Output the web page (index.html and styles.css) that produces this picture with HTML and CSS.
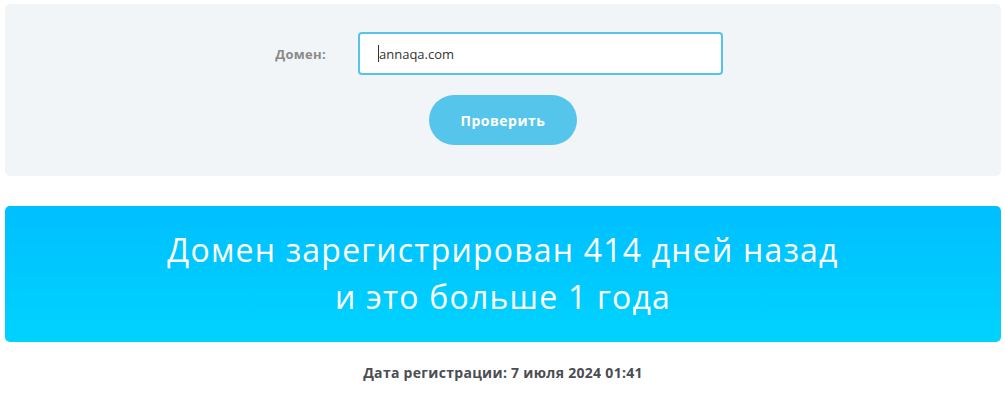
FILE: index.html
```html
<!DOCTYPE html>
<html lang="ru">
<head>
<meta charset="utf-8">
<link rel="stylesheet" href="styles.css">
</head>
<body>
<div class="page">
  <form class="check">
    <div class="row">
      <label class="label">Домен:</label>
      <div class="input"><span class="caret"></span>annaqa.com</div>
    </div>
    <div class="btnrow"><button type="button" class="btn">Проверить</button></div>
  </form>
  <div class="result">
    <p>Домен зарегистрирован 414 дней назад</p>
    <p>и это больше 1 года</p>
  </div>
  <div class="date">Дата регистрации: 7 июля 2024 01:41</div>
</div>
</body>
</html>
```
FILE: styles.css
```css
* { box-sizing: border-box; }
html, body { margin: 0; padding: 0; background: #fff; }
body { font-family: "Open Sans", "Noto Sans", sans-serif; }
.page { padding: 4px 4px 0 5px; }
.check {
  background: #f2f5f7;
  border-radius: 5px;
  height: 172px;
  padding-top: 28px;
  margin: 0;
}
.row { display: flex; align-items: center; }
.label {
  width: 321px;
  text-align: right;
  font-size: 13px;
  font-weight: 700;
  color: #8a8a8a;
  letter-spacing: 0.3px;
}
.input {
  margin-left: 32px;
  width: 365px;
  height: 43px;
  border: 2px solid #55c4eb;
  border-radius: 4px;
  background: #fff;
  display: flex;
  align-items: center;
  padding-left: 18px;
  font-size: 13px;
  color: #333;
}
.caret { display: inline-block; width: 1px; height: 17px; background: #333; }
.btnrow { display: flex; padding-left: 424px; margin-top: 20px; }
.btn {
  width: 148px;
  height: 50px;
  border: 0;
  border-radius: 25px;
  background: #56c5ec;
  color: #fff;
  font-family: inherit;
  font-weight: 700;
  font-size: 14px;
  letter-spacing: 0.5px;
  padding: 0;
}
.result {
  margin-top: 30px;
  height: 136px;
  border-radius: 5px;
  background: linear-gradient(#00bfff, #00d3ff);
  color: #fff;
  text-align: center;
  padding-top: 20px;
  font-size: 32px;
  font-weight: 400;
  letter-spacing: 1.2px;
}
.result p { margin: 0; line-height: 47px; }
.date {
  text-align: center;
  margin-top: 21px;
  font-size: 14px;
  font-weight: 700;
  color: #4a4d52;
  letter-spacing: 0.3px;
}
```
